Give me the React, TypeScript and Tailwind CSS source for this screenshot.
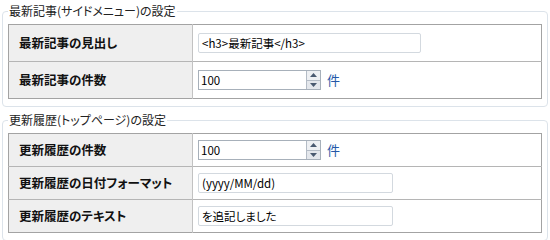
import React from 'react';

const font = "font-['Noto_Sans_CJK_JP','Noto_Sans',sans-serif] [font-feature-settings:'palt']";

const Spinner: React.FC<{ value: string }> = ({ value }) => (
  <div className="flex items-center">
    <div className="flex w-[123px] h-[20px] border border-[#a7b0ba] bg-white">
      <div className="flex-1 pl-[2px] text-[11.5px] leading-[18px] text-black">{value}</div>
      <div className="flex flex-col w-[14px] border-l border-[#b4bcc6]">
        <div className="flex-1 flex items-center justify-center bg-[#eef0f3] border-b border-[#b4bcc6]">
          <svg width="7" height="4" viewBox="0 0 7 4"><path d="M0 4 L3.5 0 L7 4 Z" fill="#4a5a70" /></svg>
        </div>
        <div className="flex-1 flex items-center justify-center bg-[#e4e7ec]">
          <svg width="7" height="4" viewBox="0 0 7 4"><path d="M0 0 L3.5 4 L7 0 Z" fill="#4a5a70" /></svg>
        </div>
      </div>
    </div>
    <span className="ml-[6px] text-[13px] text-[#2457a8]">件</span>
  </div>
);

const TextBox: React.FC<{ value: string; w: string }> = ({ value, w }) => (
  <div className={`${w} h-[20px] border border-[#d3d9df] rounded-[2px] bg-white pl-[3px] text-[11.5px] leading-[18px] text-black whitespace-nowrap`}>
    {value}
  </div>
);

type Row = { label: string; field: React.ReactNode };

const Section: React.FC<{ title: string; rows: Row[]; rowH: string; className?: string }> = ({ title, rows, rowH, className }) => (
  <fieldset className={`mx-[2px] border border-[#dce3ea] rounded-[4px] px-[5px] pt-[6px] pb-[7px] ${className ?? ''}`}>
    <legend className="px-[1px] text-[12px] leading-[14px] text-[#222]">{title}</legend>
    <table className="w-full border-collapse border border-[#a3a3a3]">
      <tbody>
        {rows.map((r, i) => (
          <tr key={i} className={`${rowH} border-b border-[#b5b5b5] last:border-b-0`}>
            <td className="w-[184px] bg-[#efefef] border-r border-[#c2c2c2] pl-[10px] text-[12.5px] font-bold text-[#111] whitespace-nowrap">
              {r.label}
            </td>
            <td className="pl-[5px]">{r.field}</td>
          </tr>
        ))}
      </tbody>
    </table>
  </fieldset>
);

export default function App() {
  return (
    <div className={`w-[550px] h-[240px] overflow-hidden bg-white pt-[4px] ${font}`}>
      <Section
        title="最新記事(サイドメニュー)の設定"
        rowH="h-[37px]"
        rows={[
          { label: '最新記事の見出し', field: <TextBox value="<h3>最新記事</h3>" w="w-[223px]" /> },
          { label: '最新記事の件数', field: <Spinner value="100" /> },
        ]}
      />
      <Section
        title="更新履歴(トップページ)の設定"
        rowH="h-[33px]"
        className="mt-[6px]"
        rows={[
          { label: '更新履歴の件数', field: <Spinner value="100" /> },
          { label: '更新履歴の日付フォーマット', field: <TextBox value="(yyyy/MM/dd)" w="w-[195px]" /> },
          { label: '更新履歴のテキスト', field: <TextBox value="を追記しました" w="w-[195px]" /> },
        ]}
      />
    </div>
  );
}
